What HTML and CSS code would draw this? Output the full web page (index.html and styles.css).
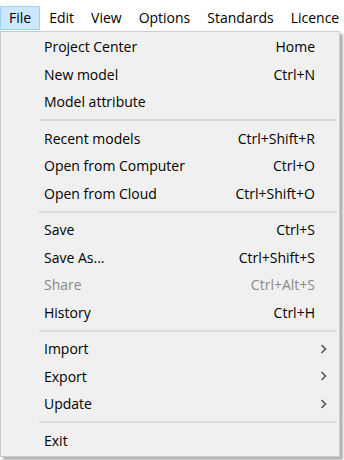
FILE: index.html
```html
<!DOCTYPE html>
<html lang="en">
<head>
    <meta charset="UTF-8">
    <title>File menu</title>
    <link rel="stylesheet" href="styles.css">
</head>
<body>
    <!-- Thanh menu trên cùng -->
    <div class="menubar">
        <span class="menubar-item active">File</span>
        <span class="menubar-item">Edit</span>
        <span class="menubar-item">View</span>
        <span class="menubar-item">Options</span>
        <span class="menubar-item">Standards</span>
        <span class="menubar-item">Licence</span>
    </div>

    <!-- Menu File đang mở -->
    <div class="dropdown">
        <div class="menu-row"><span>Project Center</span><span class="key">Home</span><span></span></div>
        <div class="menu-row"><span>New model</span><span class="key">Ctrl+N</span><span></span></div>
        <div class="menu-row"><span>Model attribute</span><span class="key"></span><span></span></div>
        <div class="sep"></div>
        <div class="menu-row"><span>Recent models</span><span class="key">Ctrl+Shift+R</span><span></span></div>
        <div class="menu-row"><span>Open from Computer</span><span class="key">Ctrl+O</span><span></span></div>
        <div class="menu-row"><span>Open from Cloud</span><span class="key">Ctrl+Shift+O</span><span></span></div>
        <div class="sep"></div>
        <div class="menu-row"><span>Save</span><span class="key">Ctrl+S</span><span></span></div>
        <div class="menu-row"><span>Save As...</span><span class="key">Ctrl+Shift+S</span><span></span></div>
        <div class="menu-row disabled"><span>Share</span><span class="key">Ctrl+Alt+S</span><span></span></div>
        <div class="menu-row"><span>History</span><span class="key">Ctrl+H</span><span></span></div>
        <div class="sep"></div>
        <div class="menu-row"><span>Import</span><span class="key"></span><span class="arrow"><svg width="7" height="10" viewBox="0 0 7 10"><polyline points="1.5,1 5.5,5 1.5,9" fill="none" stroke="#555" stroke-width="1.6"/></svg></span></div>
        <div class="menu-row"><span>Export</span><span class="key"></span><span class="arrow"><svg width="7" height="10" viewBox="0 0 7 10"><polyline points="1.5,1 5.5,5 1.5,9" fill="none" stroke="#555" stroke-width="1.6"/></svg></span></div>
        <div class="menu-row"><span>Update</span><span class="key"></span><span class="arrow"><svg width="7" height="10" viewBox="0 0 7 10"><polyline points="1.5,1 5.5,5 1.5,9" fill="none" stroke="#555" stroke-width="1.6"/></svg></span></div>
        <div class="sep"></div>
        <div class="menu-row"><span>Exit</span><span class="key"></span><span></span></div>
    </div>
</body>
</html>
```

FILE: styles.css
```css
* {
    margin: 0;
    padding: 0;
    box-sizing: border-box;
}

body {
    font-family: 'Open Sans', sans-serif;
    font-size: 14px;
    color: #000;
    background-color: #ffffff;
    width: 344px;
    height: 460px;
    overflow: hidden;
}

/* Menu bar */
.menubar {
    display: flex;
    align-items: flex-end;
    height: 31px;
    padding-bottom: 1px;
    white-space: nowrap;
}

.menubar-item {
    height: 24px;
    line-height: 22px;
    padding: 0 7px;
    border: 1px solid transparent;
    margin-right: 1px;
}

.menubar-item.active {
    padding: 0 8px;
    background-color: #cce8ff;
    border-color: #99d1ff;
}

/* Dropdown */
.dropdown {
    width: 340px;
    background-color: #f0f0f0;
    border: 1px solid #cccccc;
    padding: 1px 0 2px;
    box-shadow: 3px 3px 2px rgba(0,0,0,0.3);
}

.menu-row {
    display: grid;
    grid-template-columns: 1fr auto 24px;
    align-items: center;
    height: 27.5px;
    padding-left: 43px;
}

.menu-row.disabled {
    color: #8a8a8a;
}

.arrow {
    display: flex;
    align-items: center;
    padding-left: 5px;
}

.sep {
    height: 9px;
    margin: 0 2px 0 38px;
    display: flex;
    flex-direction: column;
    justify-content: center;
}

.sep::before {
    content: "";
    display: block;
    height: 2px;
    background-color: #dcdcdc;
}
```
